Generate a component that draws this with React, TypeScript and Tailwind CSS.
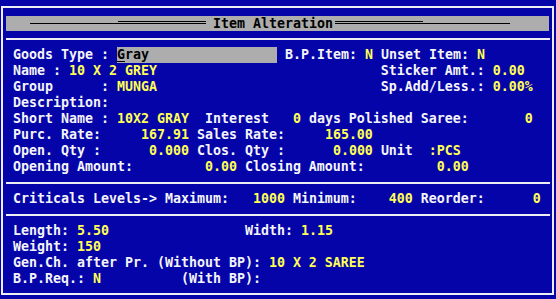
import React from "react";

type Item = { c: number; t: string; y?: boolean; field?: boolean };

const Line = ({ items }: { items: Item[] }) => {
  const out: React.ReactNode[] = [];
  let pos = 0;
  items.forEach((it, i) => {
    if (it.c > pos) out.push(<span key={"s" + i}>{" ".repeat(it.c - pos)}</span>);
    if (it.field) {
      out.push(
        <span key={"f" + i} className="inline-block align-top w-[160px] h-[16px] bg-[#ADADAD] text-black">
          <span className="underline decoration-black decoration-[1px] underline-offset-[2px]">G</span>ray
        </span>
      );
      pos = it.c + 20;
    } else {
      out.push(
        <span key={"t" + i} className={it.y ? "text-[#FFFF55]" : "text-[#F4F4F8]"}>
          {it.t}
        </span>
      );
      pos = it.c + it.t.length;
    }
  });
  return <div className="h-[16px] leading-[16px] whitespace-pre pl-[10px]">{out}</div>;
};

const Sep = () => (
  <div className="h-[16px] flex items-center ml-[3px] mr-[2px]">
    <div className="h-[2px] w-full bg-[#EDEDF5]" />
  </div>
);

export default function App() {
  return (
    <div className="w-[556px] h-[299px] bg-[#0404A8] overflow-hidden pt-[6px] pl-[1px] font-['DejaVu_Sans_Mono',monospace] font-bold text-[13.29px]">
      <div className="w-[553px] h-[289px] border-2 border-[#EDEDF5] flex flex-col">
        <div className="mt-[8px] ml-[3px] mr-[3px] h-[15px] bg-[#ADADAD] flex items-start pl-[24px]">
          <div className="flex mt-[5px]">
            <div className="w-[88px] h-[3px] border-b border-black" />
            <div className="w-[88px] h-[3px] border-y border-black" />
          </div>
          <div className="ml-[7px] w-[121px] leading-[15px] text-black whitespace-pre">Item Alteration</div>
          <div className="flex mt-[5px] ml-[1px]">
            <div className="w-[88px] h-[3px] border-y border-black" />
            <div className="w-[87px] h-[3px] border-b border-black" />
          </div>
        </div>
        <Sep />
        <Line items={[{ c: 0, t: "Goods Type :" }, { c: 13, t: "", field: true }, { c: 34, t: "B.P.Item:" }, { c: 44, t: "N", y: true }, { c: 46, t: "Unset Item:" }, { c: 58, t: "N", y: true }]} />
        <Line items={[{ c: 0, t: "Name :" }, { c: 7, t: "10 X 2 GREY", y: true }, { c: 46, t: "Sticker Amt.:" }, { c: 60, t: "0.00", y: true }]} />
        <Line items={[{ c: 0, t: "Group" }, { c: 11, t: ":" }, { c: 13, t: "MUNGA", y: true }, { c: 46, t: "Sp.Add/Less.:" }, { c: 60, t: "0.00%", y: true }]} />
        <Line items={[{ c: 0, t: "Description:" }]} />
        <Line items={[{ c: 0, t: "Short Name :" }, { c: 13, t: "10X2 GRAY", y: true }, { c: 24, t: "Interest" }, { c: 35, t: "0", y: true }, { c: 37, t: "days Polished Saree:" }, { c: 64, t: "0", y: true }]} />
        <Line items={[{ c: 0, t: "Purc. Rate:" }, { c: 16, t: "167.91", y: true }, { c: 23, t: "Sales Rate:" }, { c: 39, t: "165.00", y: true }]} />
        <Line items={[{ c: 0, t: "Open. Qty :" }, { c: 17, t: "0.000", y: true }, { c: 23, t: "Clos. Qty :" }, { c: 40, t: "0.000", y: true }, { c: 46, t: "Unit" }, { c: 52, t: ":PCS", y: true }]} />
        <Line items={[{ c: 0, t: "Opening Amount:" }, { c: 24, t: "0.00", y: true }, { c: 29, t: "Closing Amount:" }, { c: 53, t: "0.00", y: true }]} />
        <Sep />
        <Line items={[{ c: 0, t: "Criticals Levels-> Maximum:" }, { c: 30, t: "1000", y: true }, { c: 35, t: "Minimum:" }, { c: 47, t: "400", y: true }, { c: 51, t: "Reorder:" }, { c: 65, t: "0", y: true }]} />
        <Sep />
        <Line items={[{ c: 0, t: "Length:" }, { c: 8, t: "5.50", y: true }, { c: 29, t: "Width:" }, { c: 36, t: "1.15", y: true }]} />
        <Line items={[{ c: 0, t: "Weight:" }, { c: 8, t: "150", y: true }]} />
        <Line items={[{ c: 0, t: "Gen.Ch. after Pr. (Without BP):" }, { c: 32, t: "10 X 2 SAREE", y: true }]} />
        <Line items={[{ c: 0, t: "B.P.Req.:" }, { c: 10, t: "N", y: true }, { c: 21, t: "(With BP):" }]} />
      </div>
    </div>
  );
}
